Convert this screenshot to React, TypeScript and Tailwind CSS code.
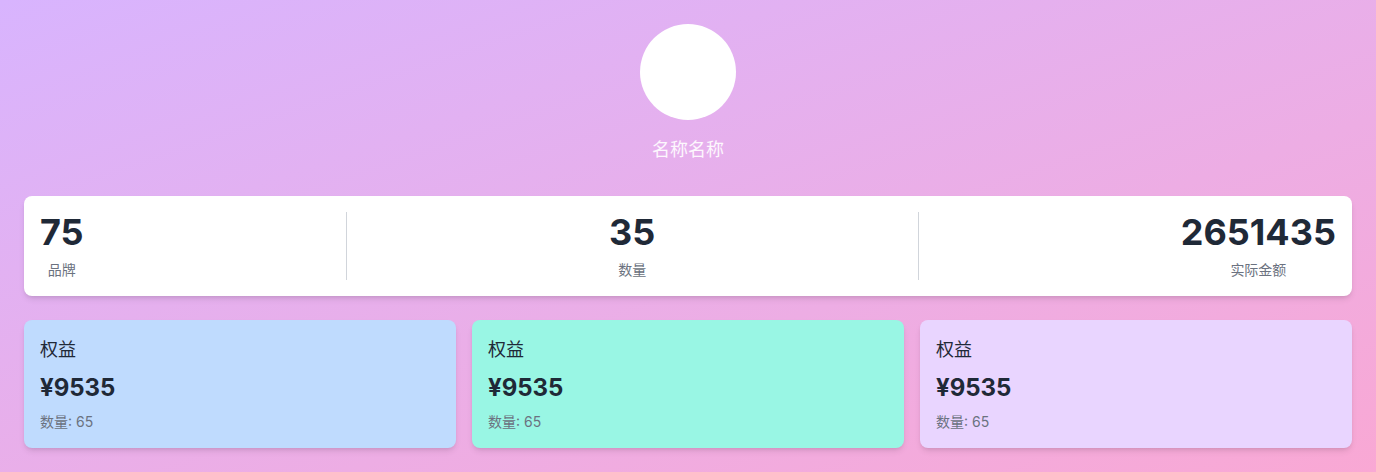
import React from "react";

const font = { fontFamily: '"Inter", "Noto Sans CJK SC", sans-serif' };

function Stat({ value, label }: { value: string; label: string }) {
  return (
    <div className="flex flex-col items-center">
      <div className="text-[36px] leading-[40px] font-bold text-[#1f2937]">{value}</div>
      <div className="mt-2 text-sm leading-5 text-[#6b7280]">{label}</div>
    </div>
  );
}

function Card({ bg }: { bg: string }) {
  return (
    <div className={`rounded-lg p-4 shadow-md ${bg}`}>
      <div className="text-lg leading-7 text-[#1f2937]">权益</div>
      <div className="mt-2 text-2xl leading-8 font-bold text-[#1f2937]">¥9535</div>
      <div className="mt-2 text-sm leading-5 text-[#6b7280]">数量: 65</div>
    </div>
  );
}

export default function App() {
  return (
    <div
      style={font}
      className="min-h-screen bg-linear-to-br from-[#d8b4fe] to-[#f9a8d4] px-6 pt-6 pb-6"
    >
      <div className="flex flex-col items-center">
        <div className="h-24 w-24 rounded-full bg-white" />
        <div className="mt-4 text-lg leading-7 text-white/90">名称名称</div>
      </div>

      <div className="mt-8 flex justify-between rounded-lg bg-white p-4 shadow-md">
        <Stat value="75" label="品牌" />
        <div className="w-px bg-[#d1d5db]" />
        <Stat value="35" label="数量" />
        <div className="w-px bg-[#d1d5db]" />
        <Stat value="2651435" label="实际金额" />
      </div>

      <div className="mt-6 grid grid-cols-3 gap-4">
        <Card bg="bg-[#bfdbfe]" />
        <Card bg="bg-[#99f6e4]" />
        <Card bg="bg-[#e9d5ff]" />
      </div>
    </div>
  );
}
